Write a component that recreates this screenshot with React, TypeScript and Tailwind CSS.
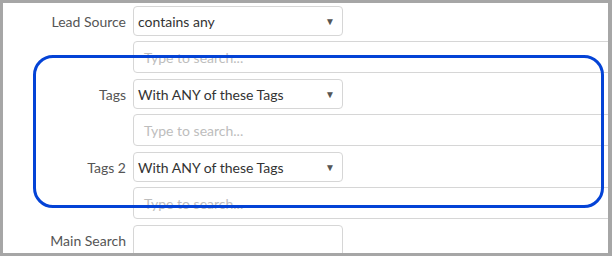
import { ReactNode } from 'react'

const FONT = { fontFamily: 'Lato, "Open Sans", sans-serif' }

function Row({ label, children, h }: { label?: string; children: ReactNode; h: string }) {
  return (
    <div className={`flex items-center ${h}`}>
      <div className="w-[123px] shrink-0 text-right text-[14px] text-[#555]">{label}</div>
      <div className="ml-[7px] flex h-full flex-1 items-center">{children}</div>
    </div>
  )
}

function Select({ value }: { value: string }) {
  return (
    <div className="flex h-full w-[210px] items-center justify-between rounded-[4px] border border-[#d6d6d6] bg-white pl-[4px] pr-[7px] text-[14px] text-[#333]">
      <span>{value}</span>
      <span className="text-[10px] text-[#555]">▼</span>
    </div>
  )
}

function Search() {
  return (
    <div className="mr-[-8px] flex h-full flex-1 items-center rounded-[4px] border border-[#d6d6d6] bg-white pl-[10px] text-[14px] text-[#bdbdbd]">
      Type to search...
    </div>
  )
}

function Group({ label, value }: { label: string; value: string }) {
  return (
    <>
      <Row label={label} h="h-[30px]"><Select value={value} /></Row>
      <div className="h-[5px]" />
      <Row h="h-[32px]"><Search /></Row>
      <div className="h-[6px]" />
    </>
  )
}

export default function App() {
  return (
    <div style={FONT} className="relative h-[256px] w-[612px] overflow-hidden border-b-[3px] border-l-[3px] border-r-[4px] border-t-[3px] border-[#a6a6a6] bg-white">
      <div className="flex flex-col pt-[3px] pr-[4px]">
        <Group label="Lead Source" value="contains any" />
        <Group label="Tags" value="With ANY of these Tags" />
        <Group label="Tags 2" value="With ANY of these Tags" />
        <Row label="Main Search" h="h-[30px]">
          <div className="h-[40px] w-[210px] self-start rounded-[4px] border border-[#d6d6d6] bg-white" />
        </Row>
      </div>
      <div className="pointer-events-none absolute left-[30px] top-[52px] h-[153px] w-[571px] rounded-[20px] border-[3px] border-[#0443d6]" />
    </div>
  )
}
